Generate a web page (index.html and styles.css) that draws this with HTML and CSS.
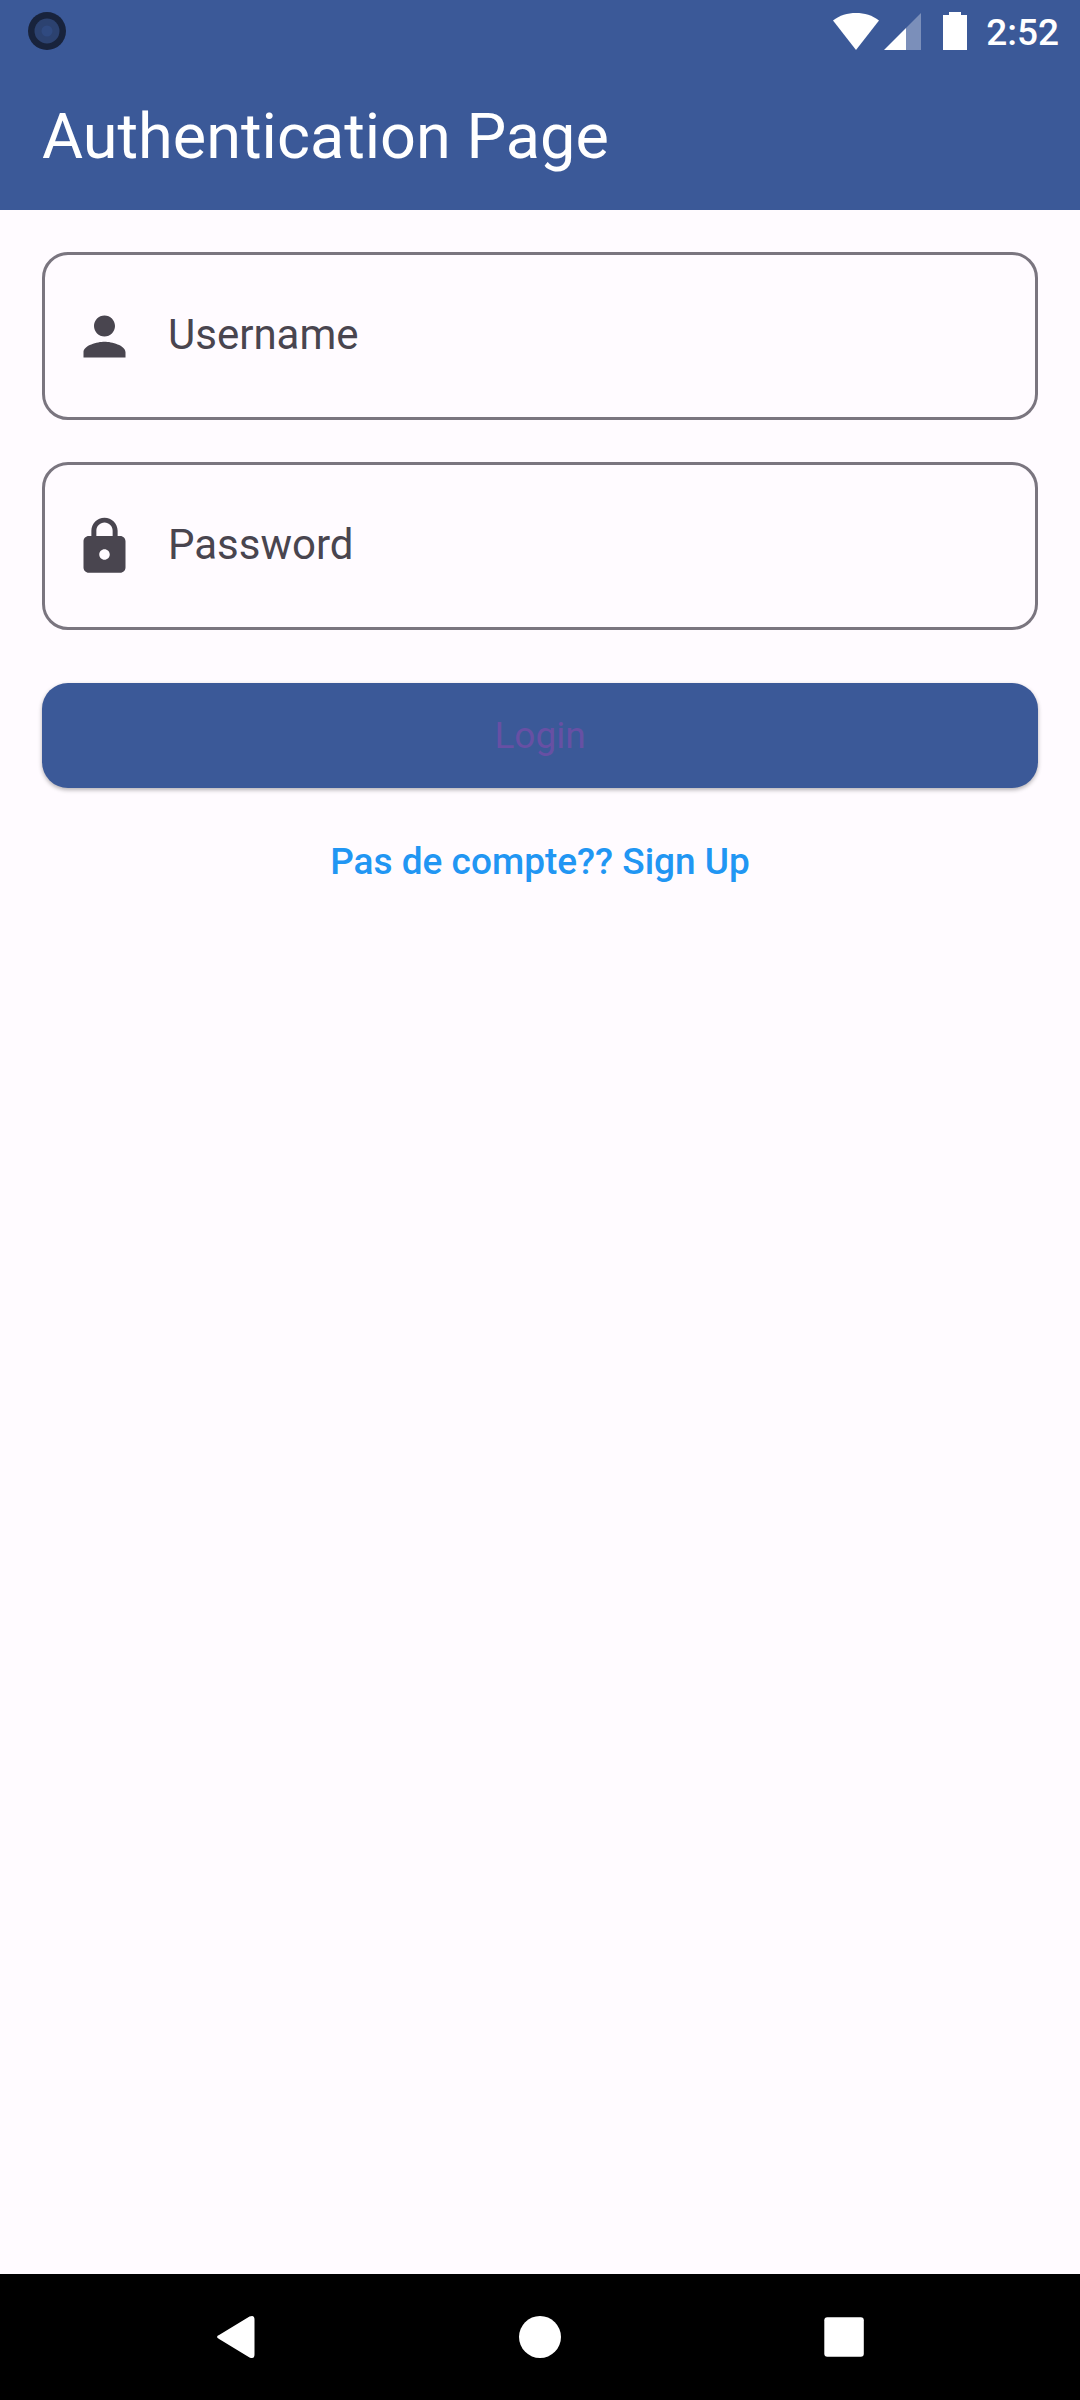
FILE: index.html
```html
<!DOCTYPE html>
<html lang="fr">
<head>
<meta charset="utf-8">
<meta name="viewport" content="width=device-width, initial-scale=1">
<title>Authentication Page</title>
<link rel="stylesheet" href="styles.css">
</head>
<body>
<div class="screen">
  <header class="header">
    <div class="status-bar">
      <svg class="camera" viewBox="0 0 38 38" aria-hidden="true">
        <circle cx="19" cy="19" r="19" fill="#18233c"/>
        <circle cx="19" cy="19" r="12.5" fill="#2c4270"/>
        <circle cx="19" cy="19" r="5.5" fill="#304a80"/>
      </svg>
      <div class="status-icons">
        <svg class="wifi" viewBox="0 0 46 38" aria-hidden="true">
          <path d="M0 8.5C6.500 3.300 14.500 1 23 1s16.500 2.300 23 7.500L23 38z" fill="#fff"/>
        </svg>
        <svg class="signal" viewBox="0 0 37 38" aria-hidden="true">
          <path d="M37 1V38H22V16z" fill="#fff" fill-opacity=".33"/>
          <path d="M22 16V38H0z" fill="#fff"/>
        </svg>
        <svg class="battery" viewBox="0 0 24 38" aria-hidden="true">
          <path d="M6 0h12v3h6v35H0V3h6z" fill="#fff"/>
        </svg>
        <time class="clock">2:52</time>
      </div>
    </div>
    <h1 class="title">Authentication Page</h1>
  </header>

  <main class="content">
    <form class="form">
      <label class="field">
        <svg class="field-icon" viewBox="0 0 24 24" aria-hidden="true">
          <path d="M12 12c2.210 0 4-1.790 4-4s-1.790-4-4-4-4 1.790-4 4 1.790 4 4 4zm0 2c-2.670 0-8 1.340-8 4v2h16v-2c0-2.660-5.330-4-8-4z"/>
        </svg>
        <input class="field-input" type="text" name="username" placeholder="Username" aria-label="Username" autocomplete="username">
      </label>
      <label class="field">
        <svg class="field-icon" viewBox="0 0 24 24" aria-hidden="true">
          <path d="M18 8h-1V6c0-2.760-2.240-5-5-5S7 3.240 7 6v2H6c-1.100 0-2 .9-2 2v10c0 1.100.9 2 2 2h12c1.100 0 2-.9 2-2V10c0-1.100-.9-2-2-2zm-6 9c-1.100 0-2-.9-2-2s.9-2 2-2 2 .9 2 2-.9 2-2 2zm3.100-9H8.900V6c0-1.710 1.390-3.100 3.100-3.100s3.100 1.390 3.100 3.100v2z"/>
        </svg>
        <input class="field-input" type="password" name="password" placeholder="Password" aria-label="Password" autocomplete="current-password">
      </label>
      <button class="login" type="submit">Login</button>
    </form>
    <a class="signup" href="#signup">Pas de compte?? Sign Up</a>
  </main>

  <nav class="nav-bar" aria-label="System">
    <button class="nav-button" type="button" aria-label="Back">
      <svg class="nav-icon" viewBox="0 0 48 48" aria-hidden="true">
        <path d="M7.500 21.800 37.500 3.600Q42.500 1.500 42.500 6.500V41.500Q42.500 46.500 37.500 44.400L7.500 26.200Q2.500 24 7.500 21.800z"/>
      </svg>
    </button>
    <button class="nav-button" type="button" aria-label="Home">
      <svg class="nav-icon" viewBox="0 0 48 48" aria-hidden="true">
        <circle cx="24" cy="24" r="21"/>
      </svg>
    </button>
    <button class="nav-button" type="button" aria-label="Recent apps">
      <svg class="nav-icon" viewBox="0 0 48 48" aria-hidden="true">
        <rect x="4.300" y="4.300" width="39.500" height="39.500" rx="3"/>
      </svg>
    </button>
  </nav>
</div>
</body>
</html>
```
FILE: styles.css
```css
* {
  box-sizing: border-box;
}

body {
  margin: 0;
  background: #fffbff;
  font-family: Roboto, "Noto Sans", sans-serif;
}

button {
  border: 0;
  padding: 0;
  font: inherit;
}

.screen {
  display: flex;
  flex-direction: column;
  min-height: 100vh;
}

.header {
  background: #3b5998;
  color: #fff;
}

.status-bar {
  display: flex;
  justify-content: space-between;
  height: 63px;
  padding: 12px 21px 0 28px;
}

.status-icons {
  display: flex;
  align-items: flex-start;
}

.camera {
  width: 38px;
  height: 38px;
}

.wifi {
  width: 46px;
  height: 38px;
  margin-right: 5px;
}

.signal {
  width: 37px;
  height: 38px;
  margin-right: 22px;
}

.battery {
  width: 24px;
  height: 38px;
  margin-right: 19px;
}

.clock {
  font-size: 37px;
  font-weight: 500;
  line-height: 42px;
}

.title {
  margin: 0;
  padding: 0 42px;
  font-size: 63px;
  font-weight: 400;
  line-height: 147px;
}

.content {
  display: flex;
  flex: 1;
  flex-direction: column;
  gap: 21px;
  padding: 42px;
}

.form {
  display: flex;
  flex-direction: column;
  gap: 42px;
}

.field {
  display: flex;
  align-items: center;
  gap: 32px;
  height: 168px;
  padding: 0 28px;
  border: 3px solid #7a757f;
  border-radius: 26px;
}

.field-icon {
  flex: none;
  width: 63px;
  height: 63px;
  fill: #49454f;
}

.field-input {
  flex: 1;
  min-width: 0;
  padding: 0 0 4px;
  border: 0;
  outline: 0;
  background: transparent;
  color: #1d1b1e;
  font: 400 42px/63px Roboto, "Noto Sans", sans-serif;
}

.field-input::placeholder {
  color: #49454f;
  opacity: 1;
}

.login {
  height: 105px;
  margin-top: 11px;
  border-radius: 26px;
  background: #3b5998;
  box-shadow: 0 2px 4px rgba(0, 0, 0, 0.3);
  color: #6750a4;
  font-size: 37px;
}

.signup {
  align-self: center;
  color: #2196f3;
  font-size: 37px;
  font-weight: 500;
  line-height: 105px;
  text-decoration: none;
}

.nav-bar {
  display: grid;
  grid-template-columns: repeat(3, 1fr);
  height: 126px;
  padding: 0 84px;
  background: #000;
}

.nav-button {
  display: flex;
  align-items: center;
  justify-content: center;
  background: transparent;
}

.nav-icon {
  width: 48px;
  height: 48px;
  fill: #fff;
}
```
